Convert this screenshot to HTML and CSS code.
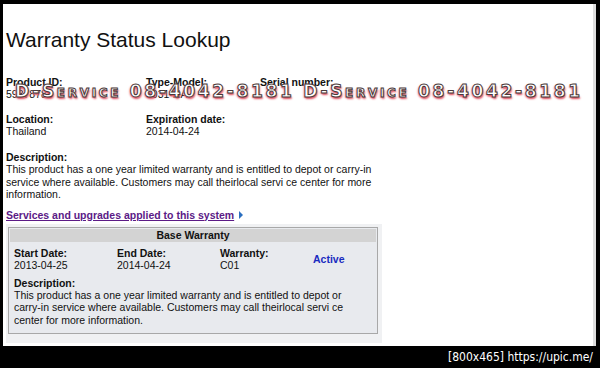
FILE: index.html
```html
<!DOCTYPE html>
<html>
    <head>
        <title>Warranty Status Lookup</title>
        <link rel="stylesheet" href="styles.css">
    </head>
    <body>
        <div class="shot">
            <div class="page">
                <h1 class="title">Warranty Status Lookup</h1>

                <div class="fields">
                    <div class="field">
                        <div class="label">Product ID:</div>
                        <div class="value">59378788</div>
                    </div>
                    <div class="field">
                        <div class="label">Type-Model:</div>
                        <div class="value">5031-NA</div>
                    </div>
                    <div class="field">
                        <div class="label">Serial number:</div>
                        <div class="value">&nbsp;</div>
                    </div>
                    <div class="field">
                        <div class="label">Location:</div>
                        <div class="value">Thailand</div>
                    </div>
                    <div class="field">
                        <div class="label">Expiration date:</div>
                        <div class="value">2014-04-24</div>
                    </div>
                </div>

                <div class="desc">
                    <div class="label">Description:</div>
                    <div class="value">This product has a one year limited warranty and is entitled to depot or carry-in service where available. Customers may call theirlocal servi ce center for more information.</div>
                </div>

                <div class="services">
                    <a class="services-link" href="#">Services and upgrades applied to this system</a>
                    <span class="arrow"></span>
                </div>

                <div class="panel">
                    <div class="warranty">
                        <div class="warranty-head">Base Warranty</div>
                        <div class="warranty-row">
                            <div class="wcol">
                                <div class="label">Start Date:</div>
                                <div class="value">2013-04-25</div>
                            </div>
                            <div class="wcol">
                                <div class="label">End Date:</div>
                                <div class="value">2014-04-24</div>
                            </div>
                            <div class="wcol narrow">
                                <div class="label">Warranty:</div>
                                <div class="value">C01</div>
                            </div>
                            <div class="status">Active</div>
                        </div>
                        <div class="warranty-desc">
                            <div class="label">Description:</div>
                            <div class="value">This product has a one year limited warranty and is entitled to depot or carry-in service where available. Customers may call theirlocal servi ce center for more information.</div>
                        </div>
                    </div>
                </div>

                <div class="watermark">D-Service 08-4042-8181 D-Service 08-4042-8181</div>
            </div>
            <div class="footer">[800x465] https://upic.me/</div>
        </div>
    </body>
</html>
```

FILE: styles.css
```css
body {
    margin: 0;
    background-color: black;
    font-family: 'Liberation Sans', Arial, sans-serif;
    font-size: 10.5px;
    color: #111;
}

.shot {
    width: 600px;
    height: 368px;
    padding-top: 4px;
    box-sizing: border-box;
}

.page {
    position: relative;
    height: 342px;
    margin: 0 4px 0 3px;
    padding: 0 0 0 3px;
    background-color: white;
    border-right: 3px solid #ddd;
    box-sizing: border-box;
}

.title {
    margin: 0;
    padding-top: 24px;
    height: 72px;
    box-sizing: border-box;
    font-size: 21px;
    font-weight: normal;
    line-height: 24px;
    color: #111;
}

.label {
    font-weight: bold;
    line-height: 12px;
}

.value {
    line-height: 12px;
}

/* ---------- product fields ------------- */
.fields {
    display: grid;
    grid-template-columns: 140px 114px 140px;
    row-gap: 13px;
    width: 400px;
}

.desc {
    margin-top: 14px;
    width: 380px;
}

.desc .value {
    line-height: 12.5px;
}

.services {
    margin-top: 8px;
    display: flex;
    align-items: center;
    gap: 5px;
}

.services-link {
    color: #5b1a86;
    font-weight: bold;
    text-decoration: underline;
    line-height: 13px;
}

.arrow {
    width: 0;
    height: 0;
    border-top: 4px solid transparent;
    border-bottom: 4px solid transparent;
    border-left: 4px solid #2a6fc0;
}

/* ---------- warranty box ------------- */
.panel {
    margin-top: 2px;
    width: 376px;
    padding: 3px 4px 9px 2px;
    background-color: #f0f1f3;
    box-sizing: border-box;
}

.warranty {
    border: 1px solid #a8a8a8;
    background-color: #e8eaee;
    padding: 1px;
}

.warranty-head {
    background-color: #d3d3d3;
    text-align: center;
    font-weight: bold;
    line-height: 13px;
}

.warranty-row {
    display: flex;
    align-items: center;
    padding: 5px 0 0 4px;
}

.wcol {
    width: 103px;
}

.wcol.narrow {
    width: 93px;
}

.status {
    color: #1a2bc0;
    font-weight: bold;
}

.warranty-desc {
    padding: 6px 26px 6px 4px;
}

.warranty-desc .value {
    line-height: 12.5px;
}

/* ---------- watermark over the fields ------------- */
.watermark {
    position: absolute;
    left: 12px;
    top: 77px;
    font-family: 'DejaVu Sans', sans-serif;
    font-variant: small-caps;
    font-size: 17px;
    font-weight: bold;
    letter-spacing: 2.7px;
    line-height: 20px;
    white-space: nowrap;
    color: white;
    -webkit-text-stroke: 1px #4a3a3a;
    text-shadow: 1px 2px 2px #e05060, -1px 1px 2px #e88090;
}

/* ---------- upload bar ------------- */
.footer {
    height: 22px;
    padding-right: 7px;
    text-align: right;
    color: white;
    font-family: 'DejaVu Sans Condensed', 'DejaVu Sans', sans-serif;
    font-size: 12px;
    line-height: 22px;
}
```
